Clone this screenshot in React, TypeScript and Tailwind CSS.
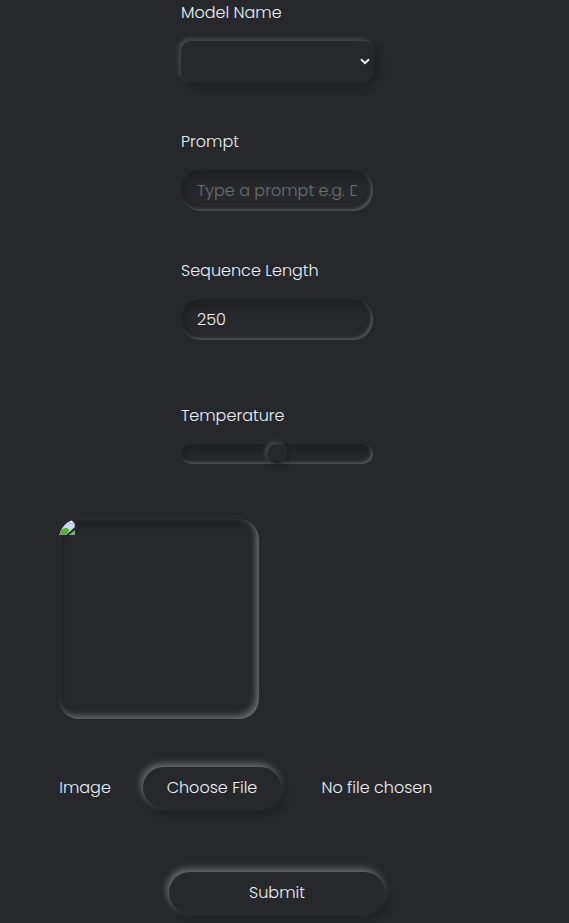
import type { ReactNode } from "react";

const inset =
  "shadow-[inset_-2px_-2px_3px_#505154,inset_2px_5px_10px_rgba(0,0,0,0.28)]";

const raised =
  "shadow-[-2px_-3px_7px_#707174,3px_5px_8px_rgba(0,0,0,0.2)]";

function Label({ children, className = "" }: { children: ReactNode; className?: string }) {
  return (
    <span className={"block h-6 leading-6 whitespace-nowrap " + className}>{children}</span>
  );
}

export default function App() {
  return (
    <main className="h-[923px] w-[569px] overflow-hidden bg-[#27282c] font-['Poppins','Inter',sans-serif] text-base font-light text-[#ecf0f9]">
      <form className="flex flex-col" onSubmit={(e) => e.preventDefault()}>
        <section className="ml-[181px] w-48 pt-px">
          <Label>Model Name</Label>
          <div className="mt-4 flex h-[41px] items-center justify-end rounded-[10px] bg-[#27282c] pr-[3px] shadow-[4px_5px_8px_rgba(0,0,0,0.22),-2px_-2px_5px_#4d4e51]">
            <svg width="10" height="7" viewBox="0 0 10 7" fill="none">
              <path d="M1 1.2 5 5.1 9 1.2" stroke="#ecf0f9" strokeWidth="2" />
            </svg>
          </div>

          <Label className="mt-12">Prompt</Label>
          <input
            type="text"
            placeholder="Type a prompt e.g. DnD character"
            className={"mt-4 block h-[41px] w-full rounded-[20px] bg-transparent px-4 outline-none placeholder:text-[#6c6e71] " + inset}
          />

          <Label className="mt-12">Sequence Length</Label>
          <input
            type="text"
            defaultValue="250"
            className={"mt-4 block h-[41px] w-full rounded-[20px] bg-transparent px-4 outline-none " + inset}
          />

          <Label className="mt-16">Temperature</Label>
          <div className={"mt-4 flex h-5 items-center justify-center rounded-[10px] " + inset}>
            <div className="size-5 rounded-full bg-[#27282c] shadow-[2px_3px_6px_rgba(0,0,0,0.2),-2px_-2px_4px_#4d4e51]" />
          </div>
        </section>

        <div className="mt-[55px] ml-[59px] size-[200px] overflow-hidden rounded-[20px] shadow-[inset_-3px_-3px_6px_#6b6c6f,inset_2px_5px_8px_rgba(0,0,0,0.22)]">
          <svg width="16" height="16" viewBox="0 0 16 16">
            <path d="M0 1h11l5 4v3L7 16H0Z" fill="#c5d7f5" />
            <path d="M0 16v-3l4-3c2-1.5 4-1.2 6.5 1L7 16Z" fill="#55ac37" />
            <path d="m10 16 6-5v5Z" fill="#78b96d" />
            <path d="M11 1v3.5h4.6L12.5 1.5Z" fill="#f5f5f5" stroke="#a0a2a6" strokeWidth=".7" />
            <path d="M0 15.6h7M10 15.6h5.6V12M15.6 5v3" stroke="#929599" strokeWidth=".7" fill="none" />
          </svg>
        </div>

        <div className="mt-12 ml-[59.3px] flex h-[41px] items-center">
          <Label className="w-[83.7px]">Image</Label>
          <button
            type="button"
            className={"h-[41px] w-[138px] rounded-[21px] bg-[#27282c] " + raised}
          >
            Choose File
          </button>
          <Label className="ml-[40.5px]">No file chosen</Label>
        </div>

        <button
          type="submit"
          className={"mt-16 ml-[169px] h-[41px] w-[216px] rounded-[21px] bg-[#27282c] " + raised}
        >
          Submit
        </button>
      </form>
    </main>
  );
}
